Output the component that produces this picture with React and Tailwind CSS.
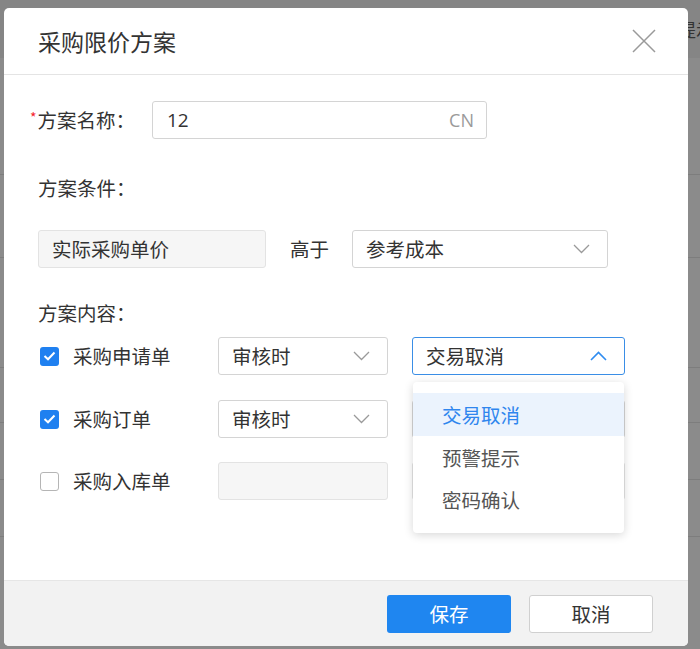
import React from "react";

const font = { fontFamily: '"Noto Sans CJK SC", "Open Sans", sans-serif' };

const Chevron = ({ up, className }) => (
  <svg width="17" height="10" viewBox="0 0 17 10" className={className} fill="none">
    {up ? (
      <path d="M1 9 L8.5 1.5 L16 9" stroke="currentColor" strokeWidth="1.6" />
    ) : (
      <path d="M1 1 L8.5 8.5 L16 1" stroke="currentColor" strokeWidth="1.3" />
    )}
  </svg>
);

const Select = ({ value, width, open, children }) => (
  <div className="relative shrink-0" style={{ width }}>
    <div
      className={
        "h-[38px] flex items-center justify-between pl-[13px] pr-[17px] rounded-[3px] bg-white text-[19.5px] text-[#333] border " +
        (open ? "border-[#3a8ee6]" : "border-[#d4d4d4]")
      }
    >
      <span className="whitespace-nowrap">{value}</span>
      <Chevron up={open} className={open ? "text-[#2f8cf0]" : "text-[#9a9a9a]"} />
    </div>
    {children}
  </div>
);

const Check = ({ on }) =>
  on ? (
    <div className="w-[19px] h-[19px] rounded-[3px] bg-[#1f80f0] flex items-center justify-center">
      <svg width="13" height="10" viewBox="0 0 13 10" fill="none">
        <path d="M1.5 5 L5 8.3 L11.5 1.5" stroke="white" strokeWidth="2" />
      </svg>
    </div>
  ) : (
    <div className="w-[19px] h-[19px] rounded-[3px] bg-white border border-[#b5b5b5]" />
  );

const Row = ({ checked, label, children, className }) => (
  <div className={"flex items-center h-[38px] " + (className || "")}>
    <div className="ml-[2px] w-[33px] shrink-0">
      <Check on={checked} />
    </div>
    <div className="w-[145px] shrink-0 whitespace-nowrap text-[19.5px] text-[#333]">{label}</div>
    {children}
  </div>
);

const Disabled = ({ width, children }) => (
  <div
    className="h-[38px] shrink-0 flex items-center pl-[13px] rounded-[3px] bg-[#f6f6f6] border border-[#e3e3e3] text-[19.5px] text-[#333] whitespace-nowrap"
    style={{ width }}
  >
    {children}
  </div>
);

export default function App() {
  return (
    <div className="relative w-[700px] h-[649px] overflow-hidden bg-[#8b8b8b]" style={font}>
      {/* page behind the mask */}
      <div className="flex flex-col">
        <div className="h-[58px] bg-[#858585] flex items-center justify-end">
          <span className="text-[18px] text-[#333] mr-[-14px] whitespace-nowrap">提示</span>
        </div>
        {[117, 83, 110, 55, 57, 57].map((h, i) => (
          <div key={i} className="border-b border-[#7d7d7d]" style={{ height: h }} />
        ))}
      </div>

      {/* dialog */}
      <div className="absolute left-[4px] top-[8px] w-[684px] h-[638px] bg-white rounded-[5px] flex flex-col overflow-hidden">
        <div className="h-[67px] shrink-0 border-b border-[#e4e4e4] flex items-center justify-between pl-[34px] pr-[32px]">
          <span className="text-[23px] text-[#333]">采购限价方案</span>
          <svg width="24" height="24" viewBox="0 0 24 24" fill="none">
            <path d="M1 1 L23 23 M23 1 L1 23" stroke="#9a9a9a" strokeWidth="1.5" />
          </svg>
        </div>

        <div className="flex-1 flex flex-col pl-[34px] pt-[26px]">
          <div className="flex items-center h-[38px] -ml-[8px]">
            <div className="w-[122px] shrink-0 whitespace-nowrap text-[19.5px] text-[#333] flex items-center">
              <span className="text-[#f5222d] text-[14px] mr-[1px] -mt-[6px]">*</span>
              <span>方案名称：</span>
            </div>
            <div className="w-[335px] h-[38px] border border-[#d4d4d4] rounded-[3px] flex items-center justify-between pl-[14px] pr-[12px]">
              <span className="text-[19px] text-[#333]" style={{ fontFamily: '"Open Sans", sans-serif' }}>12</span>
              <span className="text-[18px] text-[#9a9a9a]" style={{ fontFamily: '"Open Sans", sans-serif' }}>CN</span>
            </div>
          </div>

          <div className="mt-[37px] h-[24px] flex items-center text-[19.5px] text-[#333]">方案条件：</div>

          <div className="mt-[30px] flex items-center h-[38px]">
            <Disabled width={228}>实际采购单价</Disabled>
            <span className="ml-[24px] w-[38px] shrink-0 whitespace-nowrap text-[19.5px] text-[#333]">高于</span>
            <div className="ml-[24px]">
              <Select value="参考成本" width={256} />
            </div>
          </div>

          <div className="mt-[33px] h-[24px] flex items-center text-[19.5px] text-[#333]">方案内容：</div>

          <Row checked label="采购申请单" className="mt-[12px] relative z-10">
            <Select value="审核时" width={170} />
            <div className="ml-[24px]">
              <Select value="交易取消" width={213} open>
                <div className="absolute left-[1px] top-[45px] w-[211px] bg-white rounded-[4px] shadow-[0_2px_10px_rgba(0,0,0,0.16)] pt-[11px] pb-[12px]">
                  <div className="h-[43px] flex items-center pl-[29px] bg-[#ebf3fd] text-[#2f86ee] text-[19.5px]">交易取消</div>
                  <div className="h-[43px] flex items-center pl-[29px] text-[#555] text-[19.5px]">预警提示</div>
                  <div className="h-[42px] flex items-center pl-[29px] text-[#555] text-[19.5px]">密码确认</div>
                </div>
              </Select>
            </div>
          </Row>

          <Row checked label="采购订单" className="mt-[25px]">
            <Select value="审核时" width={170} />
            <div className="ml-[24px] w-[213px] shrink-0 h-[38px] border border-[#d4d4d4] rounded-[3px] bg-white" />
          </Row>

          <Row label="采购入库单" className="mt-[24px]">
            <Disabled width={170} />
            <div className="ml-[24px] w-[213px] shrink-0 h-[38px] border border-[#e3e3e3] rounded-[3px] bg-[#f6f6f6]" />
          </Row>
        </div>

        <div className="h-[66px] shrink-0 bg-[#f2f2f2] border-t border-[#e6e6e6] flex items-center justify-end gap-[18px] pr-[35px]">
          <button className="w-[124px] h-[38px] rounded-[3px] bg-[#1f86f0] text-white text-[19.5px]">保存</button>
          <button className="w-[124px] h-[38px] rounded-[3px] bg-white border border-[#d0d0d0] text-[#333] text-[19.5px]">取消</button>
        </div>
      </div>
    </div>
  );
}
